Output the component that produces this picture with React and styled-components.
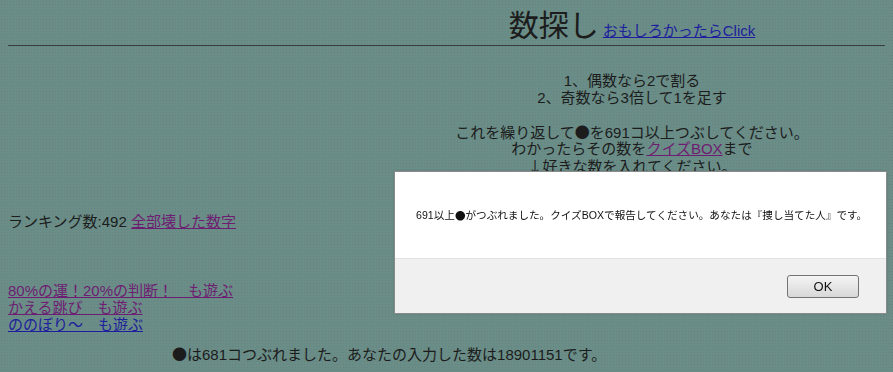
import React from "react";
import styled, { createGlobalStyle } from "styled-components";

const GlobalStyle = createGlobalStyle`
    html {
        overflow: hidden;
    }
    body {
        margin: 8px;
        background-color: #6a8d87;
        background-image: radial-gradient(rgba(0,0,0,0.06) 1px, transparent 1px);
        background-size: 3px 3px;
        color: #1c1c1c;
        font-family: "Liberation Sans", "Noto Sans CJK JP", sans-serif;
        font-size: 15px;
        line-height: 17px;
    }
    a {
        color: #1e1e9c;
    }
`

const Page = styled.div`
    width: 1248px;
`

const Header = styled.div`
    height: 36px;
    text-align: center;
    white-space: nowrap;
`

const Title = styled.span`
    font-size: 30px;
    line-height: 36px;
    margin-right: 4px;
`

const Link = styled.a`
    color: ${props => props.visited ? "#6e1e72" : "#1e1e9c"};
`

// symbols (●, ↓) come from the CJK font, full width
const Glyph = styled.span`
    font-family: "Noto Sans CJK JP", sans-serif;
`

const Rule = styled.hr`
    margin: 1px 0 0 0;
    border: none;
    border-top: 1px solid #3b3b40;
    height: 0;
`

const Rules = styled.div`
    margin-top: 26px;
    text-align: center;
`

const Line = styled.div`
    height: 17px;
    white-space: nowrap;
`

const FormRow = styled.div`
    height: 39px;
    display: flex;
    justify-content: center;
    align-items: center;
    gap: 4px;
`

const NumberInput = styled.input`
    width: 150px;
    height: 18px;
    font-size: 13px;
`

const Ranking = styled.div`
    height: 17px;
    white-space: nowrap;
`

const Games = styled.div`
    margin-top: 52px;
    display: flex;
    flex-direction: column;
    align-items: flex-start;
`

const Result = styled.div`
    margin-top: 12px;
    padding-left: 164px;
    white-space: nowrap;
`

const Dialog = styled.div`
    position: fixed;
    left: 394px;
    top: 171px;
    width: 491px;
    height: 141px;
    border: 1px solid #8a8a8a;
    background: #f0f0f0;
    display: flex;
    flex-direction: column;
    box-shadow: 0 0 2px rgba(0,0,0,0.15);
`

const DialogBody = styled.div`
    height: 86px;
    background: #ffffff;
    border-bottom: 1px solid #e2e2e2;
    display: flex;
    align-items: center;
    padding: 0 0 0 21px;
    font-size: 10.6px;
    color: #111;
    white-space: nowrap;
`

const DialogFooter = styled.div`
    flex: 1;
    display: flex;
    justify-content: flex-end;
    align-items: center;
    padding: 0 27px 0 0;
`

const OkButton = styled.button`
    width: 72px;
    height: 23px;
    border: 1px solid #747474;
    border-radius: 3px;
    background: linear-gradient(#f4f4f4, #e6e6e6 50%, #d8d8d8);
    font-family: "Liberation Sans", sans-serif;
    font-size: 13px;
    color: #111;
    padding: 0;
`

export default function App() {
    return (
        <Page>
            <GlobalStyle />
            <Header>
                <Title>数探し</Title>
                <Link href="#">おもしろかったらClick</Link>
            </Header>
            <Rule />
            <Rules>
                <Line>1、偶数なら2で割る</Line>
                <Line>2、奇数なら3倍して1を足す</Line>
                <Line />
                <Line>これを繰り返して<Glyph>●</Glyph>を691コ以上つぶしてください。</Line>
                <Line>わかったらその数を<Link href="#" visited>クイズBOX</Link>まで</Line>
                <Line><Glyph>↓</Glyph>好きな数を入れてください。</Line>
                <FormRow>
                    <NumberInput defaultValue="18901151" />
                    <button>送信</button>
                </FormRow>
            </Rules>
            <Ranking>
                ランキング数:492 <Link href="#" visited>全部壊した数字</Link>
            </Ranking>
            <Games>
                <Link href="#" visited>80%の運！20%の判断！　も遊ぶ</Link>
                <Link href="#" visited>かえる跳び　も遊ぶ</Link>
                <Link href="#">ののぼり〜　も遊ぶ</Link>
            </Games>
            <Result><Glyph>●</Glyph>は681コつぶれました。あなたの入力した数は18901151です。</Result>
            <Dialog>
                <DialogBody>
                    691以上<Glyph>●</Glyph>がつぶれました。クイズBOXで報告してください。あなたは『捜し当てた人』です。
                </DialogBody>
                <DialogFooter>
                    <OkButton>OK</OkButton>
                </DialogFooter>
            </Dialog>
        </Page>
    );
}
